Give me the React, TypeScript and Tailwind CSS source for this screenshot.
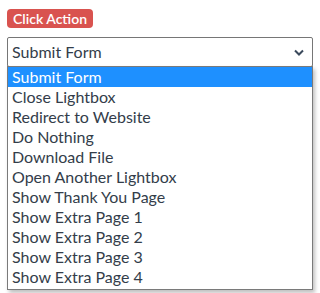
import React from 'react';

const options = [
  'Submit Form',
  'Close Lightbox',
  'Redirect to Website',
  'Do Nothing',
  'Download File',
  'Open Another Lightbox',
  'Show Thank You Page',
  'Show Extra Page 1',
  'Show Extra Page 2',
  'Show Extra Page 3',
  'Show Extra Page 4',
];

const App: React.FC = () => {
  return (
    <div className="flex flex-col items-start bg-white h-[293px] overflow-hidden px-[7px] pt-[9px]" style={{ fontFamily: 'Lato, "Open Sans", sans-serif' }}>
      {/* Label */}
      <span className="flex items-center h-[19px] px-[6px] rounded-[4px] bg-[#d9534f] text-white text-[14px] font-semibold leading-none">
        Click Action
      </span>

      {/* Select + open list */}
      <div className="relative mt-[9px] w-[306px]">
        <div className="flex items-center justify-between h-[30px] border border-[#767676] rounded-[2px] bg-white pl-[4px] pr-[8px] text-[16px] text-[#333d4a]">
          <span>Submit Form</span>
          <svg className="w-[10px] h-[7px]" viewBox="0 0 10 7">
            <path d="M1 1.5l4 4 4-4" fill="none" stroke="#3b4a5c" strokeWidth="2" />
          </svg>
        </div>

        {/* Dropdown list */}
        <div className="absolute left-0 top-[29px] w-[306px] border border-[#7a7a7a] bg-white pb-[2px] shadow-[2px_3px_4px_rgba(0,0,0,0.25)]">
          {options.map((opt, i) => (
            <div
              key={opt}
              className={`h-[20px] pl-[4px] text-[16px] leading-[20px] ${
                i === 0 ? 'bg-[#1e90ff] text-white' : 'text-[#333d4a]'
              }`}
            >
              {opt}
            </div>
          ))}
        </div>
      </div>
    </div>
  );
};

export default App;
